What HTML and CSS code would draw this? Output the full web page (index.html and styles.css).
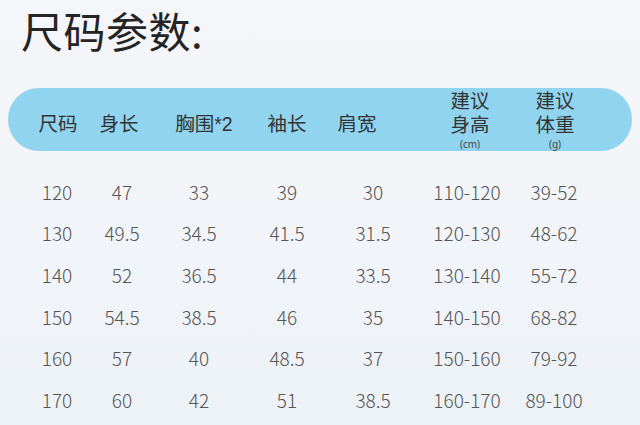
FILE: index.html
```html
<!DOCTYPE html>
<html lang="zh">
<head>
<meta charset="utf-8">
<link rel="stylesheet" href="styles.css">
</head>
<body>
<div class="page">
  <h1 class="title">尺码参数:</h1>
  <div class="bar">
    <div class="hcell single">尺码</div>
    <div class="hcell single">身长</div>
    <div class="hcell single">胸围*2</div>
    <div class="hcell single">袖长</div>
    <div class="hcell single">肩宽</div>
    <div class="hcell"><div>建议</div><div>身高</div><div class="unit">(cm)</div></div>
    <div class="hcell"><div>建议</div><div>体重</div><div class="unit">(g)</div></div>
  </div>
  <div class="table">
    <div>120</div><div>47</div><div>33</div><div>39</div><div>30</div><div>110-120</div><div>39-52</div>
    <div>130</div><div>49.5</div><div>34.5</div><div>41.5</div><div>31.5</div><div>120-130</div><div>48-62</div>
    <div>140</div><div>52</div><div>36.5</div><div>44</div><div>33.5</div><div>130-140</div><div>55-72</div>
    <div>150</div><div>54.5</div><div>38.5</div><div>46</div><div>35</div><div>140-150</div><div>68-82</div>
    <div>160</div><div>57</div><div>40</div><div>48.5</div><div>37</div><div>150-160</div><div>79-92</div>
    <div>170</div><div>60</div><div>42</div><div>51</div><div>38.5</div><div>160-170</div><div>89-100</div>
  </div>
</div>
</body>
</html>
```
FILE: styles.css
```css
html, body {
  margin: 0;
  padding: 0;
}
body {
  width: 640px;
  height: 425px;
  overflow: hidden;
  background: linear-gradient(180deg, #f5f6f9 0%, #f1f4f8 60%, #edf2f7 100%);
  font-family: "Noto Sans CJK SC", "Noto Sans", sans-serif;
}
.page {
  padding-top: 6px;
}
.title {
  margin: 0 0 34px 21px;
  font-size: 42px;
  line-height: 48px;
  font-weight: 400;
  color: #242424;
  letter-spacing: 0.5px;
}
.bar {
  margin: 0 8px;
  height: 63px;
  box-sizing: border-box;
  padding-top: 1px;
  padding-left: 12px;
  border-radius: 31px;
  background: #90d4ef;
  display: grid;
  grid-template-columns: 76px 46px 124px 42px 98px 128px 42px;
  align-items: start;
}
.hcell {
  justify-self: center;
  text-align: center;
  white-space: nowrap;
  font-family: "Liberation Sans", "Noto Sans CJK SC", sans-serif;
  font-size: 19.5px;
  line-height: 24px;
  color: #333;
}
.hcell.single {
  margin-top: 23px;
}
.hcell .unit {
  font-family: "Noto Sans", "Noto Sans CJK SC", sans-serif;
  font-size: 10px;
  line-height: 12px;
  margin-top: 1px;
  color: #444;
}
.table {
  margin: 20px 0 0 20px;
  display: grid;
  grid-template-columns: 74px 56px 98px 78px 94px 94px 80px;
  grid-auto-rows: 41.6px;
  align-items: center;
  font-size: 19px;
  font-weight: 300;
  color: #555;
}
.table > div {
  justify-self: center;
  white-space: nowrap;
  line-height: 24px;
}
```
